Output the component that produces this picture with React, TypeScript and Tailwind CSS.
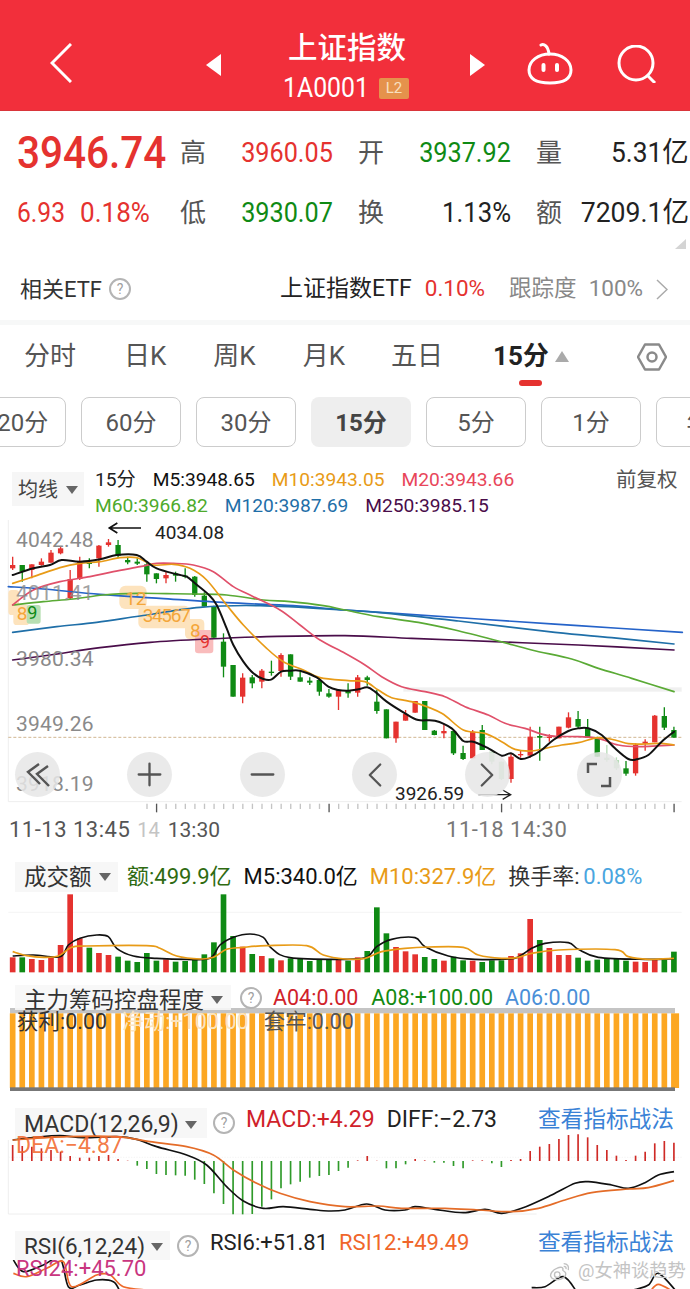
import React from "react";
import { ChevronLeft, ChevronRight, Minus, Plus } from "lucide-react";

type Pt = [number, number];

// points are read off the reference at 3x, right half is offset by 1035
const parse = (s: string, dx = 0): Pt[] =>
  s.split(" ").map((p) => {
    const [x, y] = p.split(",").map(Number);
    return [x + dx, y] as Pt;
  });

// catmull-rom to bezier so the averages look smooth
function smooth(pts: Pt[]) {
  let d = `M${pts[0][0]} ${pts[0][1]}`;
  for (let i = 0; i < pts.length - 1; i++) {
    const p0 = pts[i - 1] || pts[i];
    const p1 = pts[i];
    const p2 = pts[i + 1];
    const p3 = pts[i + 2] || p2;
    const c1x = p1[0] + (p2[0] - p0[0]) / 6;
    const c1y = p1[1] + (p2[1] - p0[1]) / 6;
    const c2x = p2[0] - (p3[0] - p1[0]) / 6;
    const c2y = p2[1] - (p3[1] - p1[1]) / 6;
    d += ` C${c1x} ${c1y} ${c2x} ${c2y} ${p2[0]} ${p2[1]}`;
  }
  return d;
}

const line = (l: string, r: string) => smooth([...parse(l), ...parse(r, 1035)]);

const RED = "#e5322f";
const GREEN = "#0f8a14";
const LIGHT = "#b6dcb6";
const barX = (i: number) => 38 + i * 28.75;

// wickTop, wickBottom, bodyTop, bodyBottom, colour
const candles: [number, number, number, number, string][] = [
  [125, 165, 150, 160, RED], [150, 200, 150, 170, GREEN], [148, 190, 148, 165, RED], [130, 152, 140, 150, RED],
  [105, 143, 113, 143, RED], [95, 118, 100, 115, RED], [165, 255, 192, 250, RED], [125, 195, 140, 192, RED],
  [130, 160, 143, 147, GREEN], [90, 155, 92, 130, RED], [72, 95, 82, 90, RED], [75, 130, 90, 122, GREEN],
  [125, 148, 135, 142, GREEN], [130, 150, 140, 146, GREEN], [140, 200, 148, 178, GREEN], [175, 205, 175, 192, GREEN],
  [170, 205, 180, 190, RED], [170, 200, 175, 182, GREEN], [160, 190, 182, 186, GREEN], [183, 245, 185, 240, GREEN],
  [232, 275, 242, 275, GREEN], [272, 370, 275, 368, GREEN], [355, 487, 380, 455, GREEN], [450, 545, 450, 545, GREEN],
  [475, 565, 488, 545, RED], [480, 520, 487, 505, GREEN], [462, 520, 467, 500, RED], [437, 482, 470, 474, GREEN],
  [415, 485, 420, 468, RED], [418, 495, 418, 485, GREEN], [465, 500, 487, 500, GREEN], [487, 510, 497, 503, GREEN],
  [490, 542, 495, 530, GREEN], [522, 548, 535, 545, GREEN], [525, 585, 525, 545, RED], [505, 548, 525, 535, GREEN],
  [480, 545, 487, 533, RED], [482, 512, 487, 495, GREEN], [525, 596, 560, 588, GREEN], [583, 670, 583, 670, GREEN],
  [620, 683, 620, 670, RED], [585, 617, 597, 617, RED], [558, 593, 558, 593, RED], [558, 645, 558, 645, GREEN],
  [645, 661, 647, 660, GREEN], [628, 670, 648, 655, RED], [645, 720, 648, 715, GREEN], [692, 735, 714, 732, GREEN],
  [645, 730, 650, 730, RED], [630, 705, 645, 705, GREEN], [710, 748, 710, 740, LIGHT], [740, 795, 740, 792, LIGHT],
  [715, 803, 725, 792, RED], [707, 728, 717, 721, RED], [635, 728, 665, 722, RED], [635, 737, 663, 668, GREEN],
  [658, 680, 665, 669, RED], [635, 670, 635, 670, RED], [592, 640, 607, 638, RED], [588, 640, 612, 635, GREEN],
  [612, 668, 640, 668, GREEN], [665, 725, 668, 725, GREEN], [690, 740, 728, 735, LIGHT], [727, 765, 735, 760, LIGHT],
  [738, 782, 760, 776, GREEN], [685, 782, 690, 775, RED], [673, 707, 680, 686, RED], [600, 682, 602, 682, RED],
  [577, 645, 603, 638, GREEN], [635, 668, 645, 668, GREEN],
];

// top of each amount bar, colour taken from r / g
const volumes = "322r 322g 327r 330r 322r 285r 133r 265r 293g 309r 315r 320g 332g 336g 309g 332g 328r 335g 333g 330g 313g 277g 133g 258g 290r 312g 318r 325g 331r 325g 325g 333g 330g 330g 328r 332g 322r 303g 172g 250g 291r 304r 313r 321g 327g 332r 320g 331g 332r 336g 331g 331g 318r 310r 207r 270g 294r 315r 315r 323g 332g 329g 325g 325g 332g 335r 336r 330r 330g 305g".split(" ");

// end of each macd bar, baseline is y=198
const macd = "150r 153r 155r 160r 165r 170r 183r 188r 188r 183r 180r 192r 197r 212g 222g 237g 240g 241g 242g 254g 267g 295g 327g 358g 358g 357g 335g 313g 280g 268g 260g 248g 243g 240g 228g 218g 196r 183r 197r 220g 220g 208g 192r 196r 203g 203g 213g 220g 196r 196r 205g 216g 195r 192r 168r 155r 147r 132r 120r 118r 127r 150r 165r 182r 195r 182r 170r 145r 138r 143r".split(" ");

const mainLines = [
  { c: "#2563c9", w: 5, d: line("25,215 130,222 300,238 480,250 680,263 880,272", "0,285 150,295 400,312 700,332 1012,352") },
  { c: "#1f6fa8", w: 5, d: line("38,352 170,335 290,322 420,303 600,277 780,272", "0,285 130,295 340,318 630,352 800,368 987,387") },
  { c: "#4a0d4a", w: 5, d: line("38,435 150,420 300,398 450,382 620,372 800,365", "0,362 200,370 450,380 700,390 987,405") },
  { c: "#5aaa35", w: 5, d: line("38,270 130,260 220,252 310,240 410,235 500,236 580,237 680,240 790,255 870,260 970,272", "0,285 100,305 220,322 330,345 460,378 560,405 680,432 760,460 860,490 987,530") },
  { c: "#e0506a", w: 5, d: line("38,270 100,225 180,200 270,185 340,170 420,155 470,145 520,145 580,150 640,170 700,215 760,245 840,285 900,330 960,375", "0,415 60,450 110,485 170,515 240,530 300,545 360,575 430,600 480,625 540,640 610,662 700,665 760,670 820,690 880,695 987,690") },
  { c: "#e89b17", w: 5, d: line("38,205 100,185 180,158 240,145 300,140 360,128 410,128 460,150 520,148 570,160 620,195 680,270 730,330 800,400 850,440 910,465 960,488", "10,497 60,500 100,525 140,548 210,563 290,595 355,645 420,655 470,680 510,703 560,708 600,700 650,690 700,683 760,668 810,675 850,686 900,687 950,685 987,690") },
  { c: "#111111", w: 6, d: line("38,180 100,160 150,150 185,135 240,140 300,133 350,120 410,120 440,140 470,160 530,178 560,185 585,205 625,238 650,270 680,340 700,390 730,440 760,475 790,492 815,493 843,470 870,467 900,467 950,487 985,515", "-20,525 10,527 40,523 67,517 90,530 125,560 180,595 220,615 270,617 320,640 355,678 385,680 430,700 470,722 498,715 527,732 555,725 590,705 625,675 670,648 700,640 730,640 770,660 810,700 850,732 875,733 910,720 950,680 987,650") },
];

function PriceChart() {
  return (
    <svg viewBox="0 0 2070 990" className="block h-[330px] w-[690px]">
      <path d="M25 15V860H2045" stroke="#eeeeee" strokeWidth="3" fill="none" />
      <rect x="1210" y="517" width="835" height="13" fill="#f0f0f0" />
      <line x1="25" x2="2045" y1="667" y2="667" stroke="#b9925a" strokeWidth="2" strokeDasharray="9 6" />
      {/* sequence marks */}
      <rect x="25" y="225" width="32" height="75" rx="10" fill="#fde3bd" />
      <rect x="40" y="270" width="48" height="60" rx="10" fill="#fde3bd" />
      <rect x="80" y="270" width="42" height="56" rx="8" fill="#b7dfb2" />
      <rect x="358" y="212" width="82" height="70" rx="18" fill="#fde3bd" />
      <rect x="415" y="272" width="155" height="68" rx="16" fill="#fde3bd" />
      <rect x="555" y="312" width="58" height="60" rx="14" fill="#fde3bd" />
      <rect x="585" y="345" width="55" height="70" rx="10" fill="#f9bcbc" />
      {candles.map(([wt, wb, bt, bb, c], i) => (
        <g key={i}>
          <line x1={barX(i)} x2={barX(i)} y1={wt} y2={wb} stroke={c} strokeWidth="4" />
          <rect x={barX(i) - 8} y={bt} width="16" height={bb - bt} fill={c} />
        </g>
      ))}
      {mainLines.map((l) => (
        <path key={l.c} d={l.d} stroke={l.c} strokeWidth={l.w} fill="none" strokeLinejoin="round" strokeLinecap="round" />
      ))}
      <g fontSize="57" fill="#f4a63a">
        <text x="50" y="316">8</text>
        <text x="375" y="270">12</text>
        <text x="428" y="322" letterSpacing="-4">34567</text>
        <text x="570" y="366">8</text>
      </g>
      <text x="82" y="312" fontSize="54" fill="#0f8a14">9</text>
      <text x="600" y="400" fontSize="54" fill="#e5322f">9</text>
      {/* ticks */}
      {Array.from({ length: 56 }, (_, i) => (
        <line
          key={i}
          x1={441 + i * 28.75}
          x2={441 + i * 28.75}
          y1="866"
          y2={i % 18 === 1 ? 892 : 882}
          stroke={i % 18 === 1 ? "#555555" : "#c4c4c4"}
          strokeWidth="4"
        />
      ))}
      <path d="M423 39H330M352 24L328 39L352 54" stroke="#111111" strokeWidth="5" fill="none" />
      <path d="M1435 839H1530M1508 825L1532 839L1508 853" stroke="#222222" strokeWidth="4" fill="none" />
    </svg>
  );
}

function AxisLabel({ className, children }: { className: string; children: React.ReactNode }) {
  return <span className={`absolute left-[16px] text-[21px] leading-[26px] tracking-[0.2px] text-[#8a8a8a] ${className}`}>{children}</span>;
}

function RoundBtn({ children }: { children: React.ReactNode }) {
  return (
    <div className="flex h-[45px] w-[45px] items-center justify-center rounded-full bg-[#e6e6e6]/85 text-[#555555]">
      {children}
    </div>
  );
}

function Help() {
  return (
    <span className="flex h-[22px] w-[22px] shrink-0 items-center justify-center rounded-full border-2 border-[#b4b4b4] text-[14px] text-[#a0a0a0]">
      ?
    </span>
  );
}

function Caret({ className = "" }: { className?: string }) {
  return <span className={`h-0 w-0 border-x-[6px] border-t-[8px] border-x-transparent border-t-[#666666] ${className}`} />;
}

function VolumeChart() {
  const black = line("38,318 100,315 180,320 205,285 240,265 290,255 325,260 350,295 400,318 470,325 560,328 630,325 660,285 700,262 750,252 790,262 815,295 870,323", "0,328 65,322 95,290 140,268 210,263 240,290 310,318 390,328 500,326 530,315 560,295 600,280 670,278 700,298 760,322 900,328 987,326");
  const orange = line("38,305 80,317 130,322 175,318 215,292 260,288 440,287 480,295 530,318 600,327 640,322 680,298 730,292 800,287 920,287 970,315", "0,327 60,325 110,305 180,295 250,291 355,292 400,315 470,325 520,322 560,310 640,300 810,299 850,320 910,328 987,325");
  return (
    <svg viewBox="0 126 2070 249" className="block h-[83px] w-[690px]">
      <line x1="25" x2="2045" y1="187" y2="187" stroke="#f4f4f4" strokeWidth="3" />
      {volumes.map((v, i) => {
        const top = parseInt(v);
        return <rect key={i} x={barX(i) - 8.5} y={top} width="17" height={367 - top} fill={v.endsWith("r") ? RED : GREEN} />;
      })}
      <path d={black} stroke="#111111" strokeWidth="5" fill="none" strokeLinejoin="round" />
      <path d={orange} stroke="#e89b17" strokeWidth="5" fill="none" strokeLinejoin="round" />
    </svg>
  );
}

function ChipChart() {
  return (
    <svg viewBox="0 474 2070 249" className="block h-[83px] w-[690px]">
      <rect x="30" y="474" width="1995" height="16" fill="#c4c4c4" />
      {Array.from({ length: 70 }, (_, i) => (
        <rect key={i} x={barX(i) - 8.5} y="490" width={i === 69 ? 24 : 17} height="224" fill="#fca722" />
      ))}
      <rect x="30" y="712" width="1995" height="12" fill="#777777" />
    </svg>
  );
}

function MacdChart() {
  const black = line("38,135 100,128 180,122 250,128 350,125 410,133 470,155 560,180 620,210 680,275 730,318 790,340 850,335 930,343 985,348", "0,345 65,327 120,345 180,345 210,335 270,343 355,353 420,343 470,355 530,340 620,300 690,265 730,260 800,270 850,280 900,263 940,240 987,230");
  const orange = line("38,135 200,125 350,125 450,140 560,155 640,180 700,225 770,265 840,295 930,320", "0,335 100,333 170,340 300,340 400,345 500,350 580,340 660,315 740,293 850,282 910,278 987,257");
  return (
    <svg viewBox="0 129 2070 261" className="block h-[87px] w-[690px] overflow-visible">
      <path d="M25 135V357H1610" stroke="#eeeeee" strokeWidth="3" fill="none" />
      <line x1="25" x2="2045" y1="187" y2="187" stroke="#eeeeee" strokeWidth="2" strokeDasharray="4 4" />
      {macd.map((v, i) => {
        const end = parseInt(v);
        return <line key={i} x1={barX(i)} x2={barX(i)} y1="198" y2={end} stroke={v.endsWith("r") ? "#cf2a26" : "#2f9a2a"} strokeWidth="5" />;
      })}
      <path d={black} stroke="#111111" strokeWidth="5" fill="none" strokeLinejoin="round" />
      <path d={orange} stroke="#e46c28" strokeWidth="5" fill="none" strokeLinejoin="round" />
    </svg>
  );
}

function RsiChart() {
  return (
    <svg viewBox="0 495 2070 87" className="block h-[29px] w-[690px]" fill="none" strokeLinejoin="round">
      <path d={smooth(parse("40,495 70,530 130,510 180,490 205,575 240,570 290,555 340,560 360,590"))} stroke="#111111" strokeWidth="5" />
      <path d={smooth(parse("40,535 80,545 140,520 190,500 215,575 290,540 330,540 370,575 440,585"))} stroke="#ee6a2a" strokeWidth="5" />
      <path d={smooth(parse("1595,578 1635,575 1690,545 1730,590"))} stroke="#111111" strokeWidth="5" />
      <path d={smooth(parse("1900,585 1945,570 1975,535 2030,590"))} stroke="#111111" strokeWidth="5" />
      <path d={smooth(parse("1950,590 1975,568 2020,590"))} stroke="#ee6a2a" strokeWidth="5" />
    </svg>
  );
}

export default function App() {
  return (
    <div className="relative h-[1289px] w-[690px] overflow-hidden bg-white font-[family-name:Roboto,'Noto_Sans_CJK_SC',sans-serif] text-[#222222]">
      {/* Header */}
      <div className="flex h-[111px] items-center border-b border-[#d9353a] bg-[#f22f3b] text-white">
        <svg viewBox="0 0 22 40" className="ml-[50px] mt-[15px] h-[40px] w-[22px]" fill="none" stroke="white" strokeWidth="3">
          <path d="M21 1L2 20l19 19" />
        </svg>
        <span className="ml-[134px] mt-[19px] h-0 w-0 border-y-[11px] border-r-[15px] border-y-transparent border-r-white" />
        <div className="ml-[63px] mt-[20px] flex w-[126px] flex-col items-center">
          <span className="text-[29.5px] leading-[38px] font-medium">上证指数</span>
          <div className="mt-[9px] flex w-[125px] items-center gap-[3px]">
            <span className="-ml-[2px] inline-block origin-left scale-x-[0.92] text-[27px] leading-[25px]">1A0001</span>
            <span className="flex h-[21px] w-[30px] items-center justify-center rounded-[2px] bg-[#e5924c] text-[15px] text-[#f8e0c0]">L2</span>
          </div>
        </div>
        <span className="ml-[60px] mt-[19px] h-0 w-0 border-y-[11px] border-l-[15px] border-y-transparent border-l-white" />
        <svg viewBox="0 0 46 42" className="ml-[42px] mt-[18px] h-[42px] w-[46px]" fill="none" stroke="white" strokeWidth="3">
          <path d="M14 2c3-1.500 7 1 8 9" strokeLinecap="round" />
          <path d="M23 11c12 0 21 7 21 16 0 9-7 13-21 13S2 36 2 27c0-9 9-16 21-16z" />
          <rect x="14.500" y="20" width="4" height="9" rx="2" fill="white" stroke="none" />
          <rect x="28" y="20" width="4" height="9" rx="2" fill="white" stroke="none" />
        </svg>
        <svg viewBox="0 0 40 38" className="ml-[44px] mt-[17px] h-[38px] w-[40px]" fill="none" stroke="white" strokeWidth="3">
          <circle cx="19" cy="18" r="17" />
          <path d="M30 30l8 8" />
        </svg>
      </div>

      {/* Quote */}
      <div className="relative">
        <div className="grid grid-cols-[138px_153px_153px_153px] grid-rows-[60px_60px] items-center gap-x-[25px] pl-[17px] pt-[12px] text-[26px] leading-[34px]">
          <span className="inline-block origin-left scale-x-[0.9] text-[45px] leading-[48px] font-medium text-[#e5322f]">3946.74</span>
          <div className="flex justify-between"><span className="text-[#555555]">高</span><span className="inline-block origin-right scale-x-[0.9] text-[28px] text-[#e5322f]">3960.05</span></div>
          <div className="flex justify-between"><span className="text-[#555555]">开</span><span className="inline-block origin-right scale-x-[0.9] text-[28px] text-[#0f8a14]">3937.92</span></div>
          <div className="flex justify-between"><span className="text-[#555555]">量</span><span className="inline-block origin-right scale-x-[0.94] text-[28px]">5.31亿</span></div>
          <div className="flex text-[28px] text-[#e5322f]">
            <span className="inline-block w-[65px] origin-left scale-x-[0.88]">6.93</span>
            <span className="inline-block origin-left scale-x-[0.93]">0.18%</span>
          </div>
          <div className="flex justify-between"><span className="text-[#555555]">低</span><span className="inline-block origin-right scale-x-[0.9] text-[28px] text-[#0f8a14]">3930.07</span></div>
          <div className="flex justify-between"><span className="text-[#555555]">换</span><span className="inline-block origin-right scale-x-[0.92] text-[28px]">1.13%</span></div>
          <div className="flex justify-between"><span className="text-[#555555]">额</span><span className="inline-block origin-right scale-x-[0.95] text-[28px]">7209.1亿</span></div>
        </div>
        <svg viewBox="0 0 11 10" className="absolute right-[4px] top-[128px] h-[10px] w-[11px]"><path d="M11 0V10H0z" fill="#d4d4d4" /></svg>
      </div>

      {/* ETF row */}
      <div className="mt-[26px] flex h-[40px] items-center text-[22.5px]">
        <span className="ml-[20px] text-[22px] text-[#333333]">相关ETF</span>
        <span className="ml-[7px]"><Help /></span>
        <span className="ml-[149px] text-[23px] text-[#222222]">上证指数ETF</span>
        <span className="ml-[13px] text-[#e5322f]">0.10%</span>
        <span className="ml-[24px] text-[#888888]">跟踪度</span>
        <span className="ml-[12px] text-[#888888]">100%</span>
        <svg viewBox="0 0 12 21" className="ml-[13px] h-[21px] w-[12px]" fill="none" stroke="#aaaaaa" strokeWidth="1.500">
          <path d="M1 1l10 9.500L1 20" />
        </svg>
      </div>

      <div className="mt-[11px] h-[5px] bg-[#f7f8f8]" />

      {/* Tabs */}
      <div className="relative flex h-[62px] items-center pt-[1px] text-[26px] text-[#555555]">
        <span className="ml-[24px]">分时</span>
        <span className="ml-[48px]">日K</span>
        <span className="ml-[47px]">周K</span>
        <span className="ml-[47px]">月K</span>
        <span className="ml-[46px]">五日</span>
        <span className="ml-[50px] font-bold text-[#222222]">15分</span>
        <span className="ml-[6px] h-0 w-0 border-x-[7.5px] border-b-[11px] border-x-transparent border-b-[#aaaaaa]" />
        <svg viewBox="0 0 30 28" className="ml-[68px] h-[28px] w-[30px]" fill="none" stroke="#8a8a8a" strokeWidth="2.500">
          <path d="M8 1.500h14L29 14l-7 12.500H8L1 14z" strokeLinejoin="round" />
          <circle cx="15" cy="14" r="4.500" />
        </svg>
        <span className="absolute left-[519px] top-[55px] h-[6px] w-[23px] rounded-full bg-[#e5322f]" />
      </div>

      {/* Period chips */}
      <div className="mt-[10px] ml-[-34px] flex gap-[15px] text-[24px] text-[#555555]">
        {["120分", "60分", "30分", "15分", "5分", "1分", "年K"].map((p) => (
          <span
            key={p}
            className={
              p === "15分"
                ? "flex h-[50px] w-[100px] shrink-0 items-center justify-center rounded-[8px] bg-[#eeeeee] pt-[1px] font-bold text-[#444444]"
                : "flex h-[50px] w-[100px] shrink-0 items-center justify-center rounded-[8px] border border-[#cccccc] pt-[1px]"
            }
          >
            {p}
          </span>
        ))}
      </div>

      {/* MA legend */}
      <div className="flex h-[68px] pt-[20px] text-[19.2px] leading-[26px]">
        <div className="ml-[12px] mt-[5px] flex h-[34px] w-[72px] items-center gap-[8px] bg-[#f6f6f6] pl-[6px] pt-[2px] text-[20px] text-[#444444]">
          均线
          <Caret />
        </div>
        <div className="ml-[11px] flex w-[521px] flex-col">
          <div className="flex">
            <span className="text-[#222222]">15分</span>
            <span className="ml-[17px] text-[#111111]">M5:3948.65</span>
            <span className="ml-[17px] text-[#e89b17]">M10:3943.05</span>
            <span className="ml-[17px] text-[#e8465a]">M20:3943.66</span>
          </div>
          <div className="flex">
            <span className="text-[#4eaa2c]">M60:3966.82</span>
            <span className="ml-[17px] text-[#1f6fa8]">M120:3987.69</span>
            <span className="ml-[17px] text-[#4a0d4a]">M250:3985.15</span>
          </div>
        </div>
        <span className="text-[20.5px] text-[#555555]">前复权</span>
      </div>

      {/* Main chart */}
      <div className="relative h-[330px]">
        <PriceChart />
        <span className="absolute left-[155px] top-[6px] text-[19px] leading-[24px] text-[#222222]">4034.08</span>
        <span className="absolute left-[395px] top-[267px] text-[19px] leading-[24px] text-[#222222]">3926.59</span>
        <AxisLabel className="top-[12px]">4042.48</AxisLabel>
        <AxisLabel className="top-[65px] opacity-80">4011.41</AxisLabel>
        <AxisLabel className="top-[131px]">3980.34</AxisLabel>
        <AxisLabel className="top-[196px]">3949.26</AxisLabel>
        <AxisLabel className="top-[256px]">3918.19</AxisLabel>
        <div className="absolute left-[15px] top-[237px] flex gap-[67.4px]">
          <RoundBtn>
            <svg viewBox="0 0 24 24" className="h-[24px] w-[24px]" fill="none" stroke="#555555" strokeWidth="2.400">
              <path d="M13 1L2 9l12 12M22 3L11 11l12 12" />
            </svg>
          </RoundBtn>
          <RoundBtn><Plus className="h-[37px] w-[37px] stroke-[1.5]" /></RoundBtn>
          <RoundBtn><Minus className="h-[37px] w-[37px] stroke-[1.5]" /></RoundBtn>
          <RoundBtn><ChevronLeft className="h-[42px] w-[42px] stroke-[1.3]" /></RoundBtn>
          <RoundBtn><ChevronRight className="h-[42px] w-[42px] stroke-[1.3]" /></RoundBtn>
          <RoundBtn>
            <svg viewBox="0 0 26 26" className="h-[26px] w-[26px]" fill="none" stroke="#555555" strokeWidth="2.500">
              <path d="M2 11V2h9M24 15v9h-9" />
            </svg>
          </RoundBtn>
        </div>
      </div>

      {/* Time axis labels sit right under the ticks */}
      <div className="relative mt-[-30px] flex h-[29px] items-center text-[22px] leading-[24px] text-[#555555]">
        <span className="ml-[9px] tracking-[0.5px]">11-13 13:45</span>
        <span className="ml-[7px] text-[20px] text-[#c4c4c4]">14</span>
        <span className="ml-[8px] text-[21px]">13:30</span>
        <span className="ml-[226px] tracking-[0.5px] text-[#777777]">11-18 14:30</span>
      </div>

      {/* Amount */}
      <div className="mt-[1px] flex h-[47px] items-end text-[22px] leading-[30px]">
        <div className="ml-[15px] flex h-[30px] w-[103px] items-center gap-[7px] bg-[#f7f7f7] pl-[9px] text-[22.5px] text-[#333333]">
          成交额
          <Caret />
        </div>
        <span className="ml-[9px] text-[#2f6b12]">额:499.9亿</span>
        <span className="ml-[12px] text-[#111111]">M5:340.0亿</span>
        <span className="ml-[12px] text-[#e89b17]">M10:327.9亿</span>
        <span className="ml-[12px] w-[75px] text-[#333333]">换手率:</span>
        <span className="text-[#4aa5e0]">0.08%</span>
      </div>
      <VolumeChart />

      {/* Chip control */}
      <div className="relative z-10 flex h-[35px] items-end text-[21.5px] leading-[25px]">
        <div className="ml-[15px] flex h-[25px] w-[216px] items-center gap-[7px] bg-[#f7f7f7]/90 pl-[9px] pt-[5px] text-[22.5px] text-[#333333]">
          <span className="shrink-0">主力筹码控盘程度</span>
          <Caret />
        </div>
        <span className="ml-[9px] mb-[1px]"><Help /></span>
        <span className="ml-[11px] text-[#d0222a]">A04:0.00</span>
        <span className="ml-[13px] text-[#128a12]">A08:+100.00</span>
        <span className="ml-[12px] text-[#4a8fd8]">A06:0.00</span>
      </div>
      <div className="relative mt-[-2px]">
        <ChipChart />
        <div className="absolute left-[17px] top-[1px] flex text-[21.5px] leading-[26px]">
          <span className="text-[#333333]">获利:0.00</span>
          <span className="ml-[15px] text-[#fbe4c0]">净动:+100.00</span>
          <span className="ml-[15px] text-[#555555]">套牢:0.00</span>
        </div>
      </div>

      {/* MACD */}
      <div className="flex h-[47px] items-end text-[23px] leading-[30px]">
        <div className="ml-[15px] flex h-[30px] w-[192px] items-center gap-[6px] bg-[#f7f7f7] pl-[9px] pt-[3px] text-[#333333]">
          <span className="shrink-0">MACD(12,26,9)</span>
          <Caret />
        </div>
        <span className="ml-[6px] mb-[4px]"><Help /></span>
        <span className="mb-[3px] ml-[11px] text-[#d0222a]">MACD:+4.29</span>
        <span className="mb-[3px] ml-[12px] text-[#222222]">DIFF:−2.73</span>
        <span className="mb-[3px] ml-auto mr-[16px] text-[22.7px] text-[#3a82d6]">查看指标战法</span>
      </div>
      <div className="relative h-[87px]">
        <MacdChart />
        <span className="absolute left-[16px] top-[-5px] text-[23px] leading-[26px] text-[#f26a30]/90">DEA:−4.87</span>
      </div>

      {/* RSI */}
      <div className="flex h-[35px] items-end text-[22px] leading-[29px]">
        <div className="ml-[15px] flex h-[29px] w-[155px] items-center gap-[6px] bg-[#f7f7f7] pl-[9px] pt-[2px] text-[22.5px] text-[#333333]">
          <span className="shrink-0">RSI(6,12,24)</span>
          <Caret />
        </div>
        <span className="ml-[7px] mb-[3px]"><Help /></span>
        <span className="mb-[3px] ml-[11px] text-[#222222]">RSI6:+51.81</span>
        <span className="mb-[3px] ml-[11px] text-[#f0662a]">RSI12:+49.49</span>
        <span className="mb-[3px] ml-auto mr-[16px] text-[22.7px] text-[#3a82d6]">查看指标战法</span>
      </div>
      <div className="relative h-[29px]">
        <RsiChart />
        <span className="absolute left-[16px] top-[-4px] text-[22px] leading-[26px] text-[#c93680]">RSI24:+45.70</span>
        <div className="absolute left-[548px] top-[-1px] flex items-center gap-[6px] whitespace-nowrap text-[18.3px] leading-[24px] text-[#c4c4c4]">
          <svg viewBox="0 0 26 22" className="h-[22px] w-[24px] shrink-0" fill="none" stroke="#c0c0c0" strokeWidth="1.500">
            <path d="M10 8c-5 2-8 6-7 9 1 3 6 4 10 3 4-1 7-4 6-7-1-2-3-2-3-3 1-3-2-4-6-2z" />
            <circle cx="10" cy="15" r="3" />
            <path d="M17 3c4 0 6 3 5 7M17 6c2 0 3 1 2.500 3" />
          </svg>
          <span>@女神谈趋势</span>
        </div>
      </div>
    </div>
  );
}
